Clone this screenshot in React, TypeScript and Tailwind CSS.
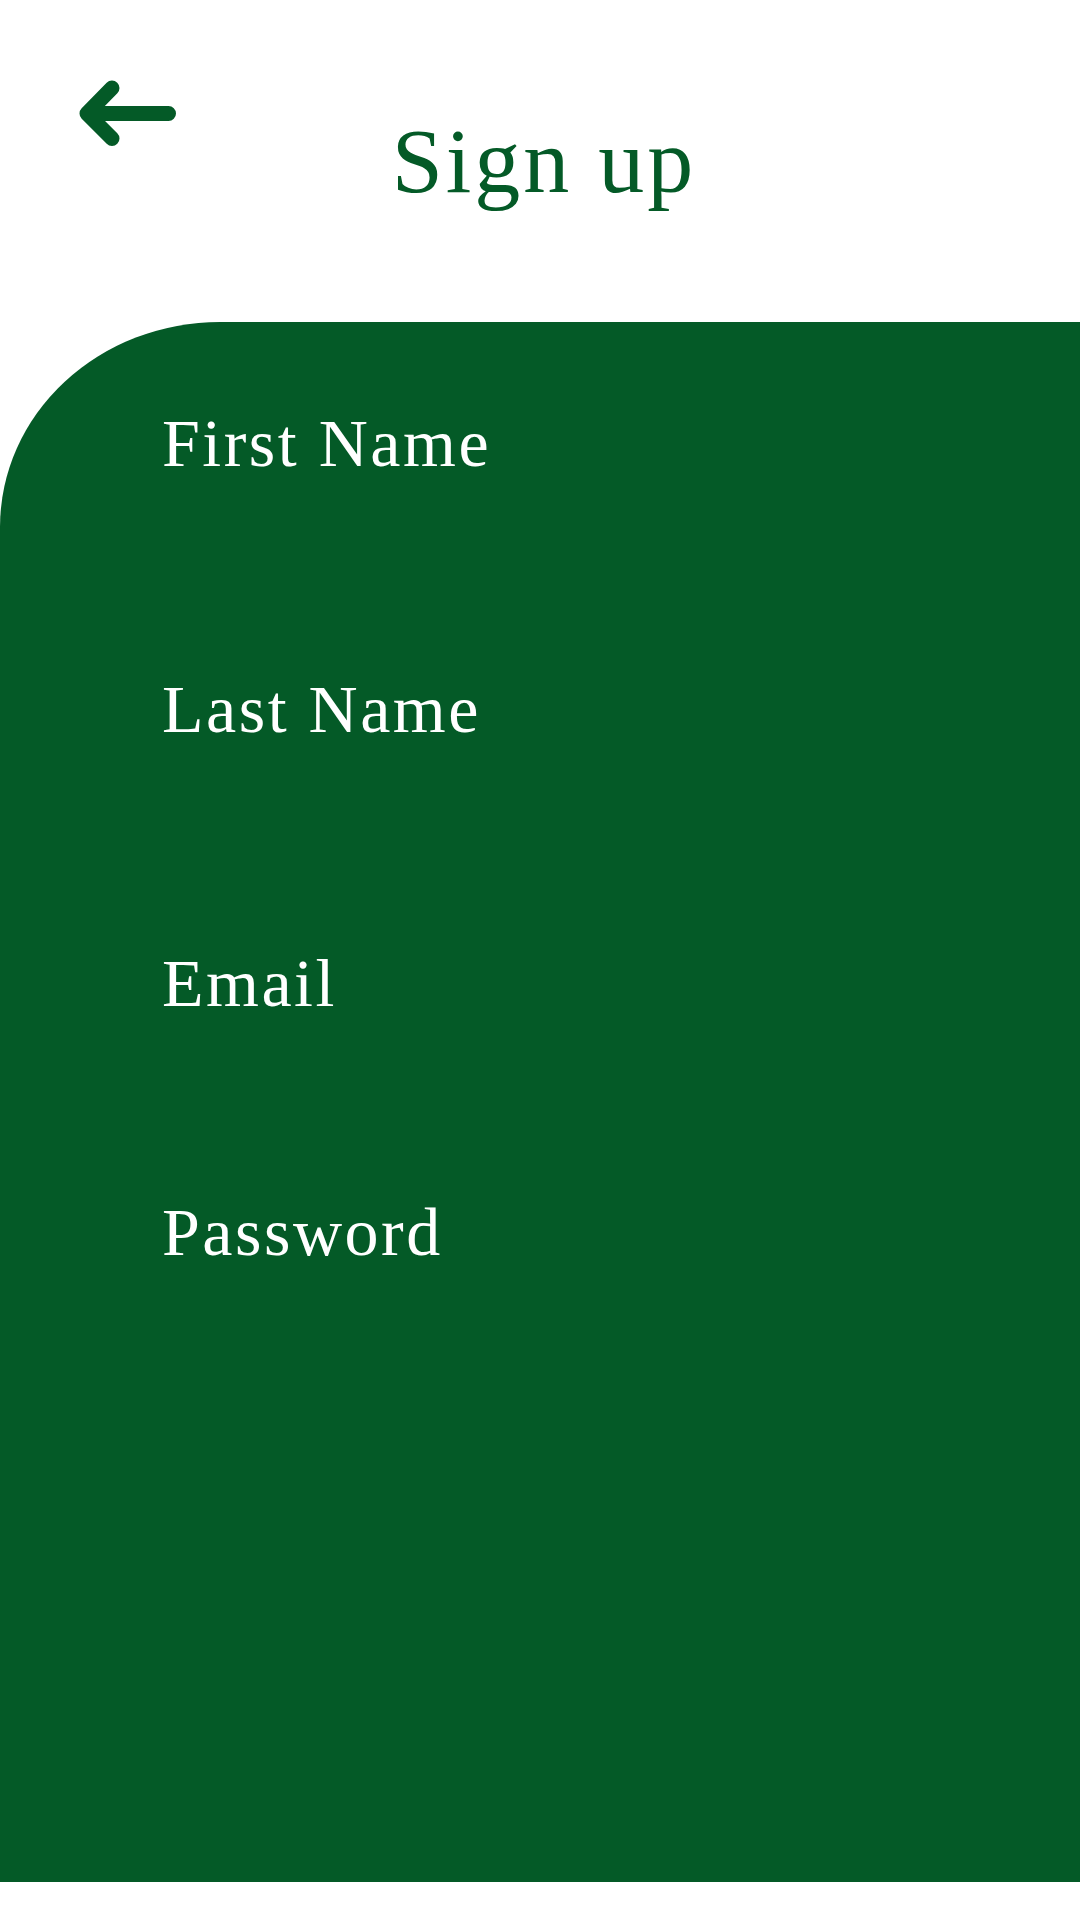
import React from 'react';

const fields = [
  { label: 'First Name', gap: 'mt-[87px]' },
  { label: 'Last Name', gap: 'mt-[198px]' },
  { label: 'Email', gap: 'mt-[206px]' },
  { label: 'Password', gap: 'mt-[181px]' },
];

const BackArrow = () => (
  <svg width="97" height="66" viewBox="0 0 97 66" fill="none" aria-hidden>
    <path
      d="M89.5 33.5H8M33 8L8 33.5L33 58.5"
      stroke="#045a27"
      strokeWidth="15"
      strokeLinecap="round"
      strokeLinejoin="round"
    />
  </svg>
);

export default function App() {
  return (
    <div className="w-[1080px] h-[1920px] bg-white flex flex-col font-['Liberation_Serif',serif] overflow-hidden">
      {/* Header */}
      <div className="h-[322px] shrink-0 flex items-start pl-[79px] pr-[79px] pt-[80px]">
        <button className="shrink-0 w-[97px]">
          <BackArrow />
        </button>
        <h1 className="flex-1 text-center mt-[35px] pl-[8px] text-[92px] leading-none tracking-[3px] text-[#045a27] whitespace-nowrap">
          Sign up
        </h1>
        <div className="shrink-0 w-[97px]" />
      </div>

      {/* Form panel */}
      <div className="h-[1560px] shrink-0 bg-[#045a27] rounded-tl-[220px_205px] pl-[162px] flex flex-col">
        {fields.map((f) => (
          <label
            key={f.label}
            className={`${f.gap} text-[68px] leading-none tracking-[2.5px] text-white whitespace-nowrap`}
          >
            {f.label}
          </label>
        ))}
      </div>
    </div>
  );
}
